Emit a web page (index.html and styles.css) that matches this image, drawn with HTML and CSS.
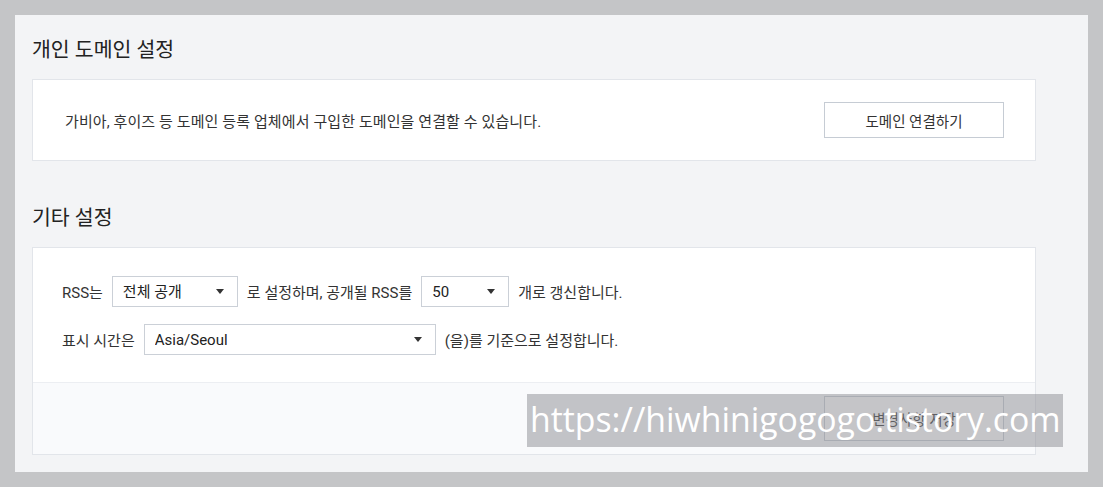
FILE: index.html
```html
<!DOCTYPE html>
<html>

<head>
  <title>블로그 설정</title>
  <link rel="stylesheet" href="styles.css">
</head>

<body>
  <div class="page">
    <div class="panel">

      <h2 class="section-title">개인 도메인 설정</h2>
      <div class="card domain-card">
        <p class="desc">가비아, 후이즈 등 도메인 등록 업체에서 구입한 도메인을 연결할 수 있습니다.</p>
        <button type="button" class="btn">도메인 연결하기</button>
      </div>

      <h2 class="section-title">기타 설정</h2>
      <div class="card etc-card">
        <div class="card-body">
          <div class="row">
            <span>RSS는</span>
            <div class="select-wrap rss-open">
              <select>
                <option>전체 공개</option>
                <option>비공개</option>
              </select>
              <i class="caret"></i>
            </div>
            <span>로 설정하며, 공개될 RSS를</span>
            <div class="select-wrap rss-count">
              <select>
                <option>50</option>
                <option>30</option>
                <option>10</option>
              </select>
              <i class="caret"></i>
            </div>
            <span>개로 갱신합니다.</span>
          </div>
          <div class="row">
            <span>표시 시간은</span>
            <div class="select-wrap timezone">
              <select>
                <option>Asia/Seoul</option>
                <option>Asia/Tokyo</option>
              </select>
              <i class="caret"></i>
            </div>
            <span>(을)를 기준으로 설정합니다.</span>
          </div>
        </div>
        <div class="card-foot">
          <button type="button" class="btn btn-save">변경사항 저장</button>
        </div>
      </div>

    </div>
  </div>

  <div class="watermark">https://hiwhinigogogo.tistory.com</div>
</body>

</html>
```

FILE: styles.css
```css
body {
  margin: 0;
  background-color: #c4c5c7;
  font-family: Roboto, "Noto Sans CJK KR", sans-serif;
  color: #333;
}

.page {
  padding: 15px;
}

.panel {
  width: 1073px;
  height: 457px;
  box-sizing: border-box;
  padding: 20px 52px 16px 17px;
  background-color: #f3f4f6;
}

.section-title {
  margin: 0 0 14px;
  font-size: 20.5px;
  line-height: 30px;
  font-weight: 400;
  color: #222;
}

.card + .section-title {
  margin-top: 42px;
}

.card {
  background-color: #fff;
  border: 1px solid #e2e5ea;
}

.domain-card {
  display: flex;
  align-items: center;
  justify-content: space-between;
  padding: 22px 31px 22px 32px;
}

.desc {
  margin: 0;
  font-size: 15px;
  letter-spacing: 0.1px;
}

.btn {
  width: 180px;
  height: 36px;
  background-color: #fff;
  border: 1px solid #c6ccd4;
  font-family: inherit;
  font-size: 14.5px;
  color: #333;
  cursor: pointer;
}

.card-body {
  padding: 28px 29px 27px;
}

.row {
  display: flex;
  align-items: center;
  gap: 9px;
  font-size: 15px;
}

.row + .row {
  margin-top: 17px;
}

.select-wrap {
  position: relative;
}

.select-wrap select {
  appearance: none;
  display: block;
  width: 100%;
  height: 31px;
  padding: 0 0 0 10px;
  background-color: #fff;
  border: 1px solid #cbd0d7;
  border-radius: 0;
  font-family: inherit;
  font-size: 15px;
  color: #222;
}

.caret {
  position: absolute;
  right: 14px;
  top: 13px;
  border-left: 4px solid transparent;
  border-right: 4px solid transparent;
  border-top: 5px solid #333;
}

.rss-open {
  width: 126px;
}

.rss-count {
  width: 88px;
}

.timezone {
  width: 292px;
}

.card-foot {
  display: flex;
  justify-content: flex-end;
  padding: 13px 31px 13px 0;
  background-color: #f9fafc;
  border-top: 1px solid #eceef2;
}

.btn-save {
  height: 45px;
}

.watermark {
  position: absolute;
  left: 527px;
  top: 394px;
  width: 536px;
  height: 53px;
  box-sizing: border-box;
  padding-left: 3px;
  background-color: rgba(140, 140, 145, 0.5);
  font-family: "Open Sans", sans-serif;
  font-size: 33.8px;
  line-height: 50px;
  color: #fff;
  white-space: nowrap;
  overflow: hidden;
}
```
